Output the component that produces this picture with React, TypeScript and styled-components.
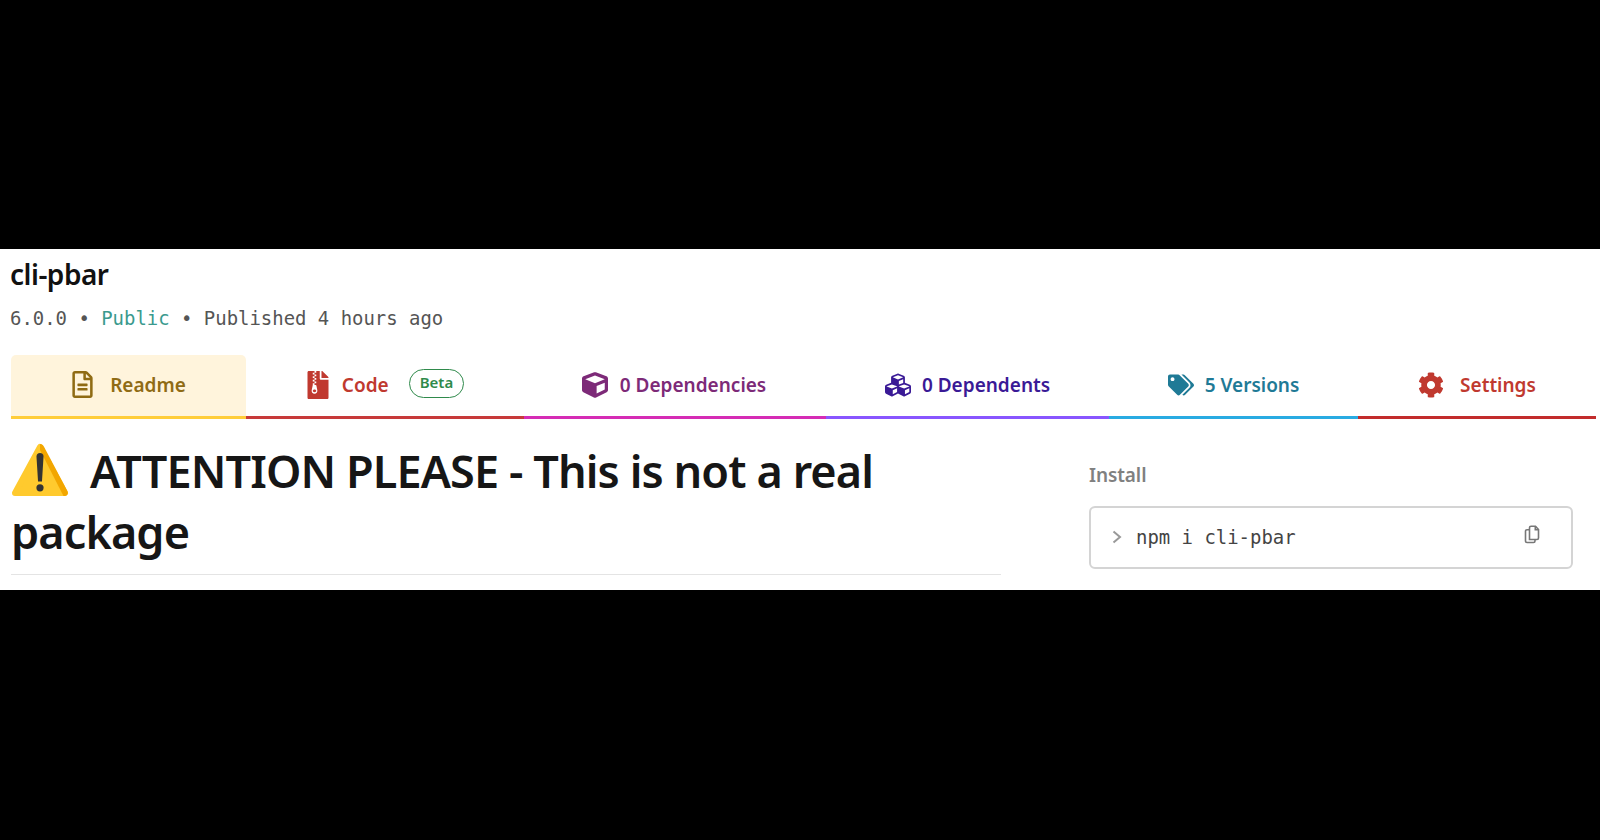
import React from 'react';
import styled, { createGlobalStyle } from 'styled-components';
import { FaCog, FaCube, FaCubes, FaFileArchive, FaRegFileAlt, FaTags } from 'react-icons/fa';

const GlobalStyle = createGlobalStyle`
  html, body {
    margin: 0;
    height: 100%;
    background: #000;
  }
`;

const sans = `"Noto Sans", "Open Sans", sans-serif`;
const mono = `"DejaVu Sans Mono", "Liberation Mono", monospace`;

const Sheet = styled.div`
  margin-top: 249px;
  height: 341px;
  box-sizing: border-box;
  padding: 0 4px 0 11px;
  background: #fff;
  overflow: hidden;
  font-family: ${sans};
`;
const Title = styled.h2`
  margin: 0 0 0 -1px;
  padding-top: 4px;
  font-size: 28px;
  line-height: 42px;
  font-weight: 600;
  letter-spacing: -0.5px;
  color: #111;
`;
const Meta = styled.div`
  margin: 11px 0 0 -1px;
  font-family: ${mono};
  font-size: 18.95px;
  line-height: 24px;
  color: #555;
`;
const PublicLabel = styled.span`
  color: #3a9a8e;
`;
const TabBar = styled.nav`
  display: flex;
  margin-top: 25px;
`;
const Tab = styled.a<{
  $width: number;
  $color: string;
  $line: string;
  $gap: number;
  $icon?: number;
  $nudge?: number;
  $active?: boolean;
}>`
  box-sizing: border-box;
  width: ${p => p.$width}px;
  height: 64px;
  padding: 0 ${p => p.$nudge ?? 0}px 2px 0;
  display: flex;
  align-items: center;
  justify-content: center;
  gap: ${p => p.$gap}px;
  border-bottom: 3px solid ${p => p.$line};
  border-radius: ${p => (p.$active ? '5px 5px 0 0' : '0')};
  background: ${p =>
    p.$active ? 'radial-gradient(circle, #fff1cc 0.6px, #fff4dc 0.7px) 0 0 / 6px 6px' : 'transparent'};
  color: ${p => p.$color};
  font-size: 19px;
  font-weight: 600;
  svg {
    font-size: ${p => p.$icon ?? 26}px;
    flex: none;
  }
`;
const Badge = styled.span`
  margin: -2px 0 0 10px;
  padding: 0 10px;
  height: 29px;
  line-height: 25px;
  box-sizing: border-box;
  border: 1.5px solid #2f8a4b;
  border-radius: 15px;
  color: #2f8a4b;
  font-size: 15px;
  letter-spacing: 0;
`;
const Columns = styled.div`
  display: flex;
  justify-content: space-between;
  padding-right: 23px;
`;
const Readme = styled.section`
  width: 990px;
`;
const Heading = styled.h1`
  margin: 0;
  padding: 21px 0 12px;
  border-bottom: 1px solid #e4e4e4;
  font-size: 45px;
  line-height: 61px;
  font-weight: 600;
  letter-spacing: -0.9px;
  color: #161616;
`;
const Emoji = styled.svg`
  width: 58px;
  height: 58px;
  margin-right: 21px;
  vertical-align: -12px;
  margin-top: -6px;
`;
const Aside = styled.aside`
  width: 484px;
  padding-top: 43px;
`;
const AsideLabel = styled.h3`
  margin: 0;
  font-size: 19px;
  line-height: 26px;
  font-weight: 600;
  letter-spacing: -0.1px;
  color: #808080;
`;
const InstallBox = styled.div`
  box-sizing: border-box;
  height: 63px;
  margin-top: 18px;
  padding: 0 30px 2px 21px;
  display: flex;
  align-items: center;
  gap: 14px;
  border: 2px solid #d4d4d4;
  border-radius: 6px;
  font-family: ${mono};
  font-size: 18.95px;
  color: #444;
`;
const Command = styled.code`
  flex: 1;
  font: inherit;
`;

function Chevron() {
  return (
    <svg width="10" height="14" viewBox="0 0 10 14" fill="none" stroke="#999" strokeWidth="2">
      <path d="M1.5 1.5 8 7 1.5 12.5" />
    </svg>
  );
}

function CopyIcon() {
  return (
    <svg width="17" height="19" viewBox="0 0 17 19" fill="none" stroke="#777" strokeWidth="1.6" style={{ marginTop: -4 }}>
      <path d="M5.5 14.5H13a1.5 1.5 0 0 0 1.5-1.5V4.5L11.5 1.2H7A1.5 1.5 0 0 0 5.5 2.7Z" />
      <path d="M11.3 1.2V4.7H14.5" />
      <path d="M5.5 4.7H3A1.5 1.5 0 0 0 1.5 6.2V16A1.5 1.5 0 0 0 3 17.5H9.5A1.5 1.5 0 0 0 11 16V14.5" />
    </svg>
  );
}

function WarningEmoji() {
  return (
    <Emoji viewBox="0 0 58 58">
      <path d="M29 5 54 51H4Z" fill="#ffca2e" stroke="#ffca2e" strokeWidth="6" strokeLinejoin="round" />
      <path d="M29 2c1.8 0 3 1 4 2.8L56.4 49c1 2 .2 4.6-2.4 5l-1.5 0L29 8Z" fill="#f2a600" />
      <path d="M25.5 14.5a3.5 3.5 0 0 1 7 0L31 39.5h-4Z" fill="#333" />
      <circle cx="29" cy="45.8" r="3.6" fill="#333" />
    </Emoji>
  );
}

export default function App() {
  return (
    <>
      <GlobalStyle />
      <Sheet>
        <Title>cli-pbar</Title>
        <Meta>
          6.0.0 • <PublicLabel>Public</PublicLabel> • Published 4 hours ago
        </Meta>
        <TabBar>
          <Tab $width={235} $color="#8f6b14" $line="#ffcd3a" $gap={14} $icon={27} $nudge={2} $active>
            <FaRegFileAlt />
            Readme
          </Tab>
          <Tab $width={278} $color="#c0392f" $line="#c73a3a" $gap={10} $icon={28} $nudge={2}>
            <FaFileArchive />
            Code
            <Badge>Beta</Badge>
          </Tab>
          <Tab $width={302} $color="#7d2a78" $line="#d52cb5" $gap={12} $nudge={2}>
            <FaCube />
            0 Dependencies
          </Tab>
          <Tab $width={283} $color="#3a1a96" $line="#8956ff" $gap={11}>
            <FaCubes />
            0 Dependents
          </Tab>
          <Tab $width={249} $color="#1f7a96" $line="#29abe2" $gap={11}>
            <FaTags />
            5 Versions
          </Tab>
          <Tab $width={238} $color="#c0392f" $line="#c22c2c" $gap={16}>
            <FaCog />
            Settings
          </Tab>
        </TabBar>
        <Columns>
          <Readme>
            <Heading>
              <WarningEmoji />
              ATTENTION PLEASE - This is not a real package
            </Heading>
          </Readme>
          <Aside>
            <AsideLabel>Install</AsideLabel>
            <InstallBox>
              <Chevron />
              <Command>npm i cli-pbar</Command>
              <CopyIcon />
            </InstallBox>
          </Aside>
        </Columns>
      </Sheet>
    </>
  );
}
